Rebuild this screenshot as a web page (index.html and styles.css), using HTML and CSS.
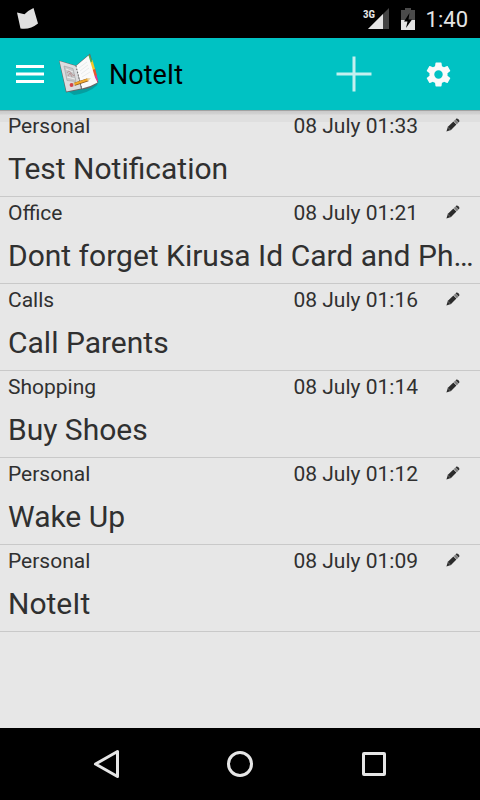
FILE: index.html
```html
<!DOCTYPE html>
<html lang="en">
<head>
<meta charset="utf-8">
<meta name="viewport" content="width=device-width, initial-scale=1">
<title>NoteIt</title>
<link rel="stylesheet" href="styles.css">
</head>
<body>
<svg class="defs" aria-hidden="true">
  <symbol id="pencil" viewBox="0 0 14 14">
    <path fill="#2b2b2b" d="M.4 13.6l1.500-4.800L7.400 3.500l3 3.100L5 12z"/>
    <path fill="#777" d="M7.800 3.100L9.200 1.800l3.100 3-1.500 1.400z"/>
    <path fill="#333" d="M9.500 1.400l.9-.8c.9-.7 3.700 1.700 2.900 2.900l-.8.900z"/>
    <path stroke="#888" stroke-width=".7" d="M1.800 9.300l2.900 2.800"/>
  </symbol>
</svg>
<div class="status">
  <svg class="status-note" width="24" height="22" viewBox="0 0 24 22"><path fill="#e0e0e0" d="M1 4.500l7.500 1.800Q12 2.500 17.500 0L22 15.500Q14 22 4.500 20.500z"/></svg>
  <div class="status-right">
    <svg width="28" height="24" viewBox="0 0 28 24">
      <path fill="#444" d="M27 1v21H6z"/><path fill="#e4e4e4" d="M21 7v15H6z"/>
      <path fill="#000" d="M0 0h15v12H0z"/>
      <text x="1" y="11" class="net">3G</text>
    </svg>
    <svg width="14" height="22" viewBox="0 0 14 22">
      <path fill="#4b4b4b" d="M4 0h6v2h4v10H0V2h4z"/><path fill="#e4e4e4" d="M0 12h14v10H0z"/>
      <path fill="#000" d="M8.500 5L3 13.500h3.500L5 20l6-8.500H7.500z"/>
    </svg>
    <time>1:40</time>
  </div>
</div>
<header class="bar">
  <button class="icon-btn menu" aria-label="Menu"><svg width="28" height="20" viewBox="0 0 28 20"><path fill="#fff" d="M0 1h28v3H0zM0 8.500h28v3H0zM0 16h28v3H0z"/></svg></button>
  <svg class="logo" width="42" height="44" viewBox="0 0 42 44" aria-hidden="true">
    <path fill="#078f91" opacity=".7" d="M8 38l31-8 .5 3Q31 41 16 43z"/>
    <path fill="#666" d="M1 8.500l17 5L32 1.500l8.500 29Q33 37 23 37.500L8 40.500z"/>
    <path fill="#db3f8f" d="M34 25l4.500-3 1.500 7-4 2z"/>
    <path fill="#e8572e" d="M33 19l4-3 1.800 7-4 2z"/>
    <path fill="#f4c928" d="M31 11l3.500-3 2.500 9-5 2z"/>
    <path fill="#55ae4d" d="M29.500 5L31.500 2.500l2.800 7-3.300 2z"/>
    <path fill="#dcdddf" d="M1.500 9L18 14l5 22.500L8.500 39.500z"/>
    <path fill="#fafafa" d="M18 14L30.500 3.500l6.500 22 2.500 5Q32 35 24 36.500z"/>
    <path fill="#c6c8ca" stroke="#999" stroke-width=".5" d="M6 14l9 2.500 3 13-9-1z"/>
    <path fill="none" stroke="#eee" d="M8 17l7 3M9 25l8 2"/>
    <path fill="none" stroke="#b18484" stroke-width=".7" d="M9 21q2-4 4 0t4 2M10 24l2-3 2 4"/>
    <path fill="none" stroke="#666" stroke-width="1.200" stroke-dasharray="1 2" d="M18 14l5.500 22"/>
    <path fill="none" stroke="#dde0e3" stroke-width=".6" d="M21 16l8-6M22 19l8-6M23 22l8-6M24 25l8-5"/>
    <path fill="none" stroke="#8a5a22" stroke-width="3.200" d="M15 32.800l15-5"/>
    <path fill="none" stroke="#f2a928" stroke-width="2.200" d="M15 32.500l15-5"/>
    <path fill="#ead2a0" d="M29 26l4 .2-3.200 3z"/>
    <path stroke="#ccc" stroke-width="3" d="M14.500 33l2-.7"/>
    <circle cx="13.500" cy="33" r="1.900" fill="#d4454b"/>
  </svg>
  <h1>NoteIt</h1>
  <button class="icon-btn add" aria-label="Add note"><svg width="36" height="36" viewBox="0 0 36 36"><path fill="#c4f0f0" d="M16.500.5h3v16h16v3h-16v16h-3v-16h-16v-3h16z"/></svg></button>
  <button class="icon-btn settings" aria-label="Settings"><svg width="29" height="29" viewBox="0 0 24 24"><path fill="#fafafa" d="M19.430 12.980c.04-.32.07-.64.07-.98s-.03-.66-.07-.98l2.110-1.650c.19-.15.24-.42.12-.64l-2-3.460c-.12-.22-.39-.3-.61-.22l-2.490 1c-.52-.4-1.080-.73-1.690-.98l-.38-2.650C14.460 2.180 14.250 2 14 2h-4c-.25 0-.46.18-.49.42l-.38 2.650c-.61.25-1.170.59-1.690.98l-2.490-1c-.23-.09-.49 0-.61.22l-2 3.460c-.13.22-.07.49.12.64l2.110 1.650c-.04.32-.07.65-.07.98s.03.66.07.98l-2.110 1.650c-.19.15-.24.42-.12.64l2 3.460c.12.22.39.3.61.22l2.490-1c.52.4 1.080.73 1.690.98l.38 2.650c.03.24.24.42.49.42h4c.25 0 .46-.18.49-.42l.38-2.650c.61-.25 1.170-.59 1.690-.98l2.490 1c.23.09.49 0 .61-.22l2-3.460c.12-.22.07-.49-.12-.64zM12 15.500a3.500 3.500 0 1 1 0-7 3.500 3.500 0 0 1 0 7z"/></svg></button>
</header>
<main>
  <ul class="notes">
    <li><div class="meta"><span>Personal</span><time>08 July 01:33</time><button class="icon-btn edit" aria-label="Edit"><svg width="14" height="14"><use href="#pencil"/></svg></button></div><h2>Test Notification</h2></li>
    <li><div class="meta"><span>Office</span><time>08 July 01:21</time><button class="icon-btn edit" aria-label="Edit"><svg width="14" height="14"><use href="#pencil"/></svg></button></div><h2>Dont forget Kirusa Id Card and Ph…</h2></li>
    <li><div class="meta"><span>Calls</span><time>08 July 01:16</time><button class="icon-btn edit" aria-label="Edit"><svg width="14" height="14"><use href="#pencil"/></svg></button></div><h2>Call Parents</h2></li>
    <li><div class="meta"><span>Shopping</span><time>08 July 01:14</time><button class="icon-btn edit" aria-label="Edit"><svg width="14" height="14"><use href="#pencil"/></svg></button></div><h2>Buy Shoes</h2></li>
    <li><div class="meta"><span>Personal</span><time>08 July 01:12</time><button class="icon-btn edit" aria-label="Edit"><svg width="14" height="14"><use href="#pencil"/></svg></button></div><h2>Wake Up</h2></li>
    <li><div class="meta"><span>Personal</span><time>08 July 01:09</time><button class="icon-btn edit" aria-label="Edit"><svg width="14" height="14"><use href="#pencil"/></svg></button></div><h2>NoteIt</h2></li>
  </ul>
</main>
<nav class="nav">
  <button class="icon-btn" aria-label="Back"><svg width="28" height="30" viewBox="0 0 28 30"><path fill="none" stroke="#e6e6e6" stroke-width="3" stroke-linejoin="round" d="M3.500 15L25.500 2.500v25z"/></svg></button>
  <button class="icon-btn" aria-label="Home"><svg width="28" height="28" viewBox="0 0 28 28"><circle cx="14" cy="14" r="11.500" fill="none" stroke="#e6e6e6" stroke-width="3"/></svg></button>
  <button class="icon-btn" aria-label="Recent apps"><svg width="28" height="28" viewBox="0 0 28 28"><rect x="3.500" y="3.500" width="21" height="21" rx=".5" fill="none" stroke="#e6e6e6" stroke-width="3" stroke-linejoin="round"/></svg></button>
</nav>
</body>
</html>
```
FILE: styles.css
```css
* {
  box-sizing: border-box;
}

body {
  margin: 0;
  min-height: 100vh;
  display: flex;
  flex-direction: column;
  background: #e7e7e7;
  color: #303030;
  font-family: Roboto, "Liberation Sans", sans-serif;
}

svg {
  display: block;
}

.defs {
  position: absolute;
  width: 0;
  height: 0;
}

h1,
h2 {
  margin: 0;
  font-weight: 400;
}

.icon-btn {
  display: flex;
  align-items: center;
  justify-content: center;
  padding: 0;
  border: 0;
  background: none;
}

.status {
  display: flex;
  align-items: center;
  justify-content: space-between;
  height: 38px;
  padding: 0 12px 0 16px;
  background: #000;
  color: #e4e4e4;
}

.status-right {
  display: flex;
  align-items: center;
  gap: 11px;
  font-size: 22px;
}

.net {
  fill: #e4e4e4;
  font-family: "Roboto Condensed", Roboto, sans-serif;
  font-size: 11px;
  font-weight: 700;
}

.bar {
  display: flex;
  align-items: center;
  height: 72px;
  padding: 0 27px 0 16px;
  background: #00c2c3;
  color: #000;
}

.logo {
  margin: 0 9px 0 14px;
}

h1 {
  flex: 1;
  padding-top: 2px;
  font-size: 27px;
}

.add {
  margin-right: 51px;
}

.settings {
  width: 30px;
}

main {
  flex: 1;
  background: linear-gradient(#a2a2a2 1px, #cacaca 1px, #d2d2d2 4px, #dfdfdf 5px, #dfdfdf 12px, #e7e7e7 12px);
}

.notes {
  margin: 0;
  padding: 0;
  list-style: none;
}

.notes li {
  height: 87px;
  padding: 2px 4px 0 8px;
  border-bottom: 1px solid #c9c9c9;
}

.meta {
  display: flex;
  align-items: center;
  height: 28px;
  font-size: 21px;
}

.meta span {
  flex: 1;
}

.edit {
  width: 58px;
  padding: 0 0 2px 12px;
}

h2 {
  overflow: hidden;
  font-size: 30px;
  line-height: 58px;
  height: 56px;
  white-space: nowrap;
  text-overflow: ellipsis;
}

.nav {
  display: flex;
  align-items: center;
  justify-content: center;
  gap: 106px;
  height: 72px;
  background: #000;
}
```
